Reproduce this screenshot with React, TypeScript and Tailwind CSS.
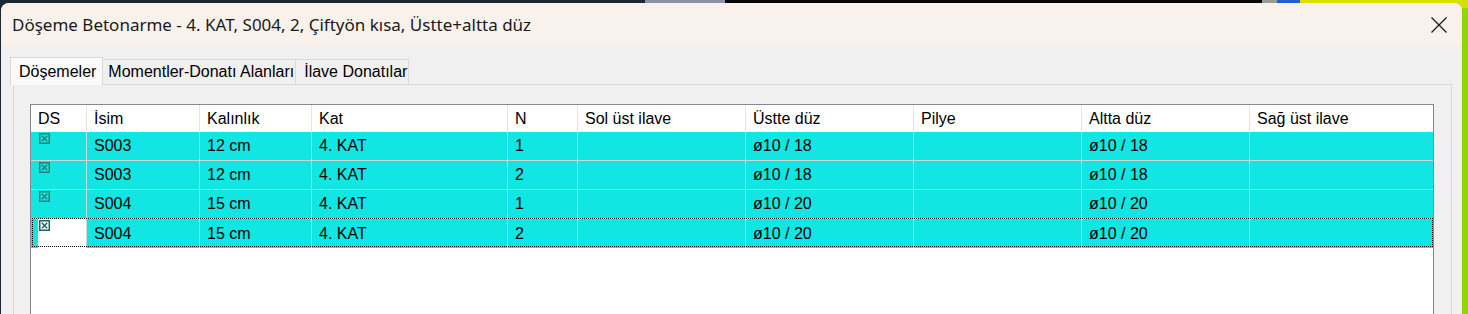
import React from "react";

const columns = [
  { title: "DS", w: "w-[56px]" },
  { title: "İsim", w: "w-[113px]" },
  { title: "Kalınlık", w: "w-[112px]" },
  { title: "Kat", w: "w-[196px]" },
  { title: "N", w: "w-[70px]" },
  { title: "Sol üst ilave", w: "w-[168px]" },
  { title: "Üstte düz", w: "w-[168px]" },
  { title: "Pilye", w: "w-[168px]" },
  { title: "Altta düz", w: "w-[168px]" },
  { title: "Sağ üst ilave", w: "flex-1" },
];

const rows = [
  ["S003", "12 cm", "4. KAT", "1", "", "ø10 / 18", "", "ø10 / 18", ""],
  ["S003", "12 cm", "4. KAT", "2", "", "ø10 / 18", "", "ø10 / 18", ""],
  ["S004", "15 cm", "4. KAT", "1", "", "ø10 / 20", "", "ø10 / 20", ""],
  ["S004", "15 cm", "4. KAT", "2", "", "ø10 / 20", "", "ø10 / 20", ""],
];

const CheckMark = ({ dark }: { dark?: boolean }) => {
  const c = dark ? "#1d6664" : "#27807d";
  return (
    <svg width="11" height="11" viewBox="0 0 11 11" className="block">
      <rect x="0.75" y="0.75" width="9.5" height="9.5" fill="none" stroke={c} strokeWidth="1.5" />
      <path d="M2.8 2.8 L8.2 8.2 M8.2 2.8 L2.8 8.2" stroke={c} strokeWidth="1.4" />
    </svg>
  );
};

const App = () => {
  return (
    <div className="relative h-[314px] w-[1468px] overflow-hidden bg-[#1b2833]">
      {/* desktop behind the dialog */}
      <div className="absolute inset-x-0 top-0 flex h-[12px]">
        <div className="w-[645px] bg-[#1b2833]" />
        <div className="w-[80px] bg-[#8d90a8]" />
        <div className="w-[537px] bg-[#050505]" />
        <div className="w-[15px] bg-[#9a9a9a]" />
        <div className="w-[23px] bg-[#1e5ed8]" />
        <div className="flex-1 bg-[#d8e000]" />
      </div>
      <div className="absolute right-0 top-[8px] h-full w-[7px] bg-[#8ed800]" />

      {/* dialog window */}
      <div
        className="relative ml-[1px] mt-[3px] h-[400px] w-[1461px] overflow-hidden rounded-t-[8px] bg-[#f0f0f0]"
        style={{ fontFamily: '"Liberation Sans", Arial, sans-serif' }}
      >
        <div className="flex h-[43px] items-center justify-between bg-[#f9f1eb] pl-[11px] pr-[15px]">
          <span
            className="text-[17px] text-[#1a1a1a]"
            style={{ fontFamily: '"Noto Sans", "Open Sans", sans-serif' }}
          >
            Döşeme Betonarme - 4. KAT, S004, 2, Çiftyön kısa, Üstte+altta düz
          </span>
          <svg width="16" height="16" viewBox="0 0 16 16">
            <path d="M0.5 0.5 L15.5 15.5 M15.5 0.5 L0.5 15.5" stroke="#1a1a1a" strokeWidth="1.3" />
          </svg>
        </div>

        {/* tabs */}
        <div className="relative z-10 ml-[9px] mt-[11px] flex items-end text-[16px] text-black">
          <div className="flex h-[28px] items-center border border-b-0 border-[#d9d9d9] bg-[#fafafa] pl-[8px] pr-[6px]">
            Döşemeler
          </div>
          <div className="mb-[1px] flex h-[25px] items-center border-r border-t border-[#d9d9d9] pl-[5px] pr-[1px]">
            Momentler-Donatı Alanları
          </div>
          <div className="mb-[1px] flex h-[25px] items-center border-r border-t border-[#d9d9d9] pl-[8px] pr-[1px]">
            İlave Donatılar
          </div>
        </div>

        {/* tab panel */}
        <div className="-mt-[1px] ml-[12px] h-[300px] w-[1439px] border border-[#d9d9d9] bg-[#f0f0f0] pl-[16px] pr-[17px] pt-[19px]">
          <div className="h-[260px] border border-[#828790] bg-white text-[16px] text-black">
            <div className="flex h-[27px] bg-white">
              {columns.map((c, i) => (
                <div
                  key={c.title}
                  className={`${c.w} flex items-center pl-[7px] ${
                    i < columns.length - 1 ? "border-r border-[#e5e5e5]" : ""
                  }`}
                >
                  {c.title}
                </div>
              ))}
            </div>
            {rows.map((r, ri) => {
              const last = ri === rows.length - 1;
              return (
                <div
                  key={ri}
                  className={`relative flex h-[29px] bg-[#12e6e2] ${
                    last ? "" : "border-b border-[#cfd6d6]"
                  }`}
                >
                  <div className="flex w-[56px] border-r border-[#cfd6d6]">
                    {last ? (
                      <div className="ml-[7px] flex flex-1 bg-white pl-[1px] pt-[1px]">
                        <CheckMark dark />
                      </div>
                    ) : (
                      <div className="pl-[8px] pt-[1px]">
                        <CheckMark />
                      </div>
                    )}
                  </div>
                  {r.map((v, ci) => (
                    <div
                      key={ci}
                      className={`${columns[ci + 1].w} flex items-center pl-[7px] ${
                        ci < r.length - 1 ? "border-r border-[#cfd6d6]" : ""
                      }`}
                    >
                      {v}
                    </div>
                  ))}
                  {last && (
                    <div className="pointer-events-none absolute -top-[1px] bottom-[1px] left-[1px] right-0 border border-dotted border-black" />
                  )}
                </div>
              );
            })}
          </div>
        </div>
      </div>
    </div>
  );
};

export default App;
